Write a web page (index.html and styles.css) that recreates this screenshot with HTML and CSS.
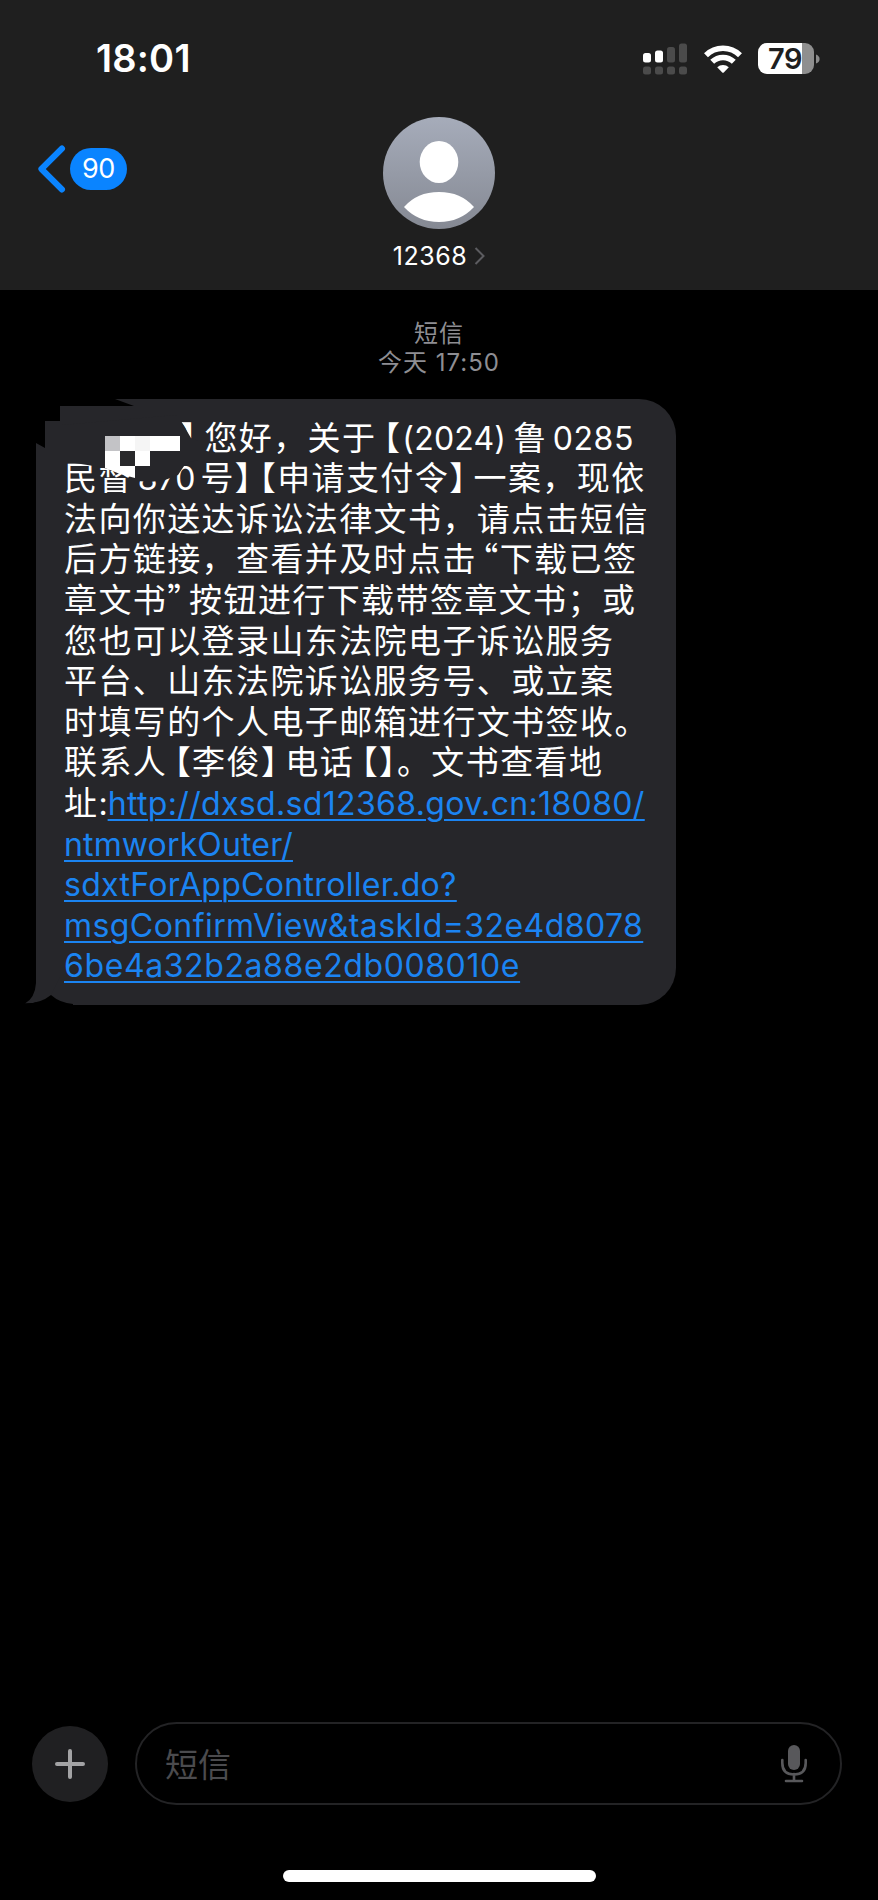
FILE: index.html
```
<!DOCTYPE html>
<html lang="zh-CN">
<head>
  <meta charset="UTF-8">
  <title>12368</title>
  <link rel="stylesheet" href="styles.css">
</head>
<body>

  <header class="top">
    <div class="status-bar">
      <div class="clock">18:01</div>
      <div class="status-icons">
        <svg class="signal" width="44" height="32" viewBox="0 0 44 32">
          <rect x="0" y="10" width="8" height="9.5" rx="2.5" fill="#fff"/>
          <rect x="12" y="7.5" width="8" height="12" rx="2.5" fill="#fff"/>
          <g fill="#4b4b4b">
            <rect x="24" y="4" width="8" height="15.5" rx="2.5"/>
            <rect x="36" y="0.5" width="8" height="19" rx="2.5"/>
            <rect x="0" y="23.5" width="8" height="8" rx="2.5"/>
            <rect x="12" y="23.5" width="8" height="8" rx="2.5"/>
            <rect x="24" y="23.5" width="8" height="8" rx="2.5"/>
            <rect x="36" y="23.5" width="8" height="8" rx="2.5"/>
          </g>
        </svg>
        <svg class="wifi" width="38" height="28" viewBox="0 0 38 28">
          <g fill="none" stroke="#fff" stroke-width="5.6">
            <path d="M2 10.2A24.3 24.3 0 0 1 36 10.2"/>
            <path d="M8.2 16.8A15.6 15.6 0 0 1 29.8 16.8"/>
          </g>
          <path d="M13.2 22.2A8.4 8.4 0 0 1 24.8 22.2L20 27.2Q19 28.2 18 27.2Z" fill="#fff"/>
        </svg>
        <div class="battery"><span>79</span></div>
        <svg class="battery-nub" width="4" height="10" viewBox="0 0 4 10">
          <path d="M0 0.5Q3.6 2 3.6 5T0 9.5Z" fill="#8c8c8c"/>
        </svg>
      </div>
    </div>

    <div class="nav">
      <div class="back">
        <svg width="32" height="50" viewBox="0 0 32 50">
          <path d="M25 4.5L4.400 25L25 45.5" fill="none" stroke="#0a84ff" stroke-width="6" stroke-linecap="round" stroke-linejoin="round"/>
        </svg>
        <span class="badge">90</span>
      </div>
      <div class="contact">
        <svg class="avatar" width="112" height="112" viewBox="0 0 112 112">
          <defs>
            <linearGradient id="avatarFill" x1="0" y1="0" x2="0" y2="1">
              <stop offset="0" stop-color="#a6acba"/>
              <stop offset="1" stop-color="#858993"/>
            </linearGradient>
          </defs>
          <circle cx="56" cy="56" r="56" fill="url(#avatarFill)"/>
          <ellipse cx="56" cy="45" rx="19.3" ry="21" fill="#fff"/>
          <path d="M21 90Q34 75 56 75T91 90Q77 105 56 105T21 90Z" fill="#fff"/>
        </svg>
        <div class="name">12368
          <svg width="11" height="20" viewBox="0 0 11 20">
            <path d="M1.5 2L9.5 10L1.5 18" fill="none" stroke="#5c5c60" stroke-width="2"/>
          </svg>
        </div>
      </div>
    </div>
  </header>

  <main class="thread">
    <div class="stamp">
      <div class="kind">短信</div>
      <div>今天 <span class="stamp-time">17:50</span></div>
    </div>

    <div class="bubble">
      <p class="first"><i class="close">】</i>您好，关于<i class="open">【</i><span class="num year">(2024)</span>鲁<span class="num code">0285</span></p>
      <p>民督<span class="num case">870</span>号<i class="close">】</i><i class="open tight">【</i>申请支付令<i class="close">】</i>一案，现依</p>
      <p>法向你送达诉讼法律文书，请点击短信</p>
      <p>后方链接，查看并及时点击<i class="quote-open">“</i>下载已签</p>
      <p>章文书<i class="quote-close">”</i>按钮进行下载带签章文书；或</p>
      <p>您也可以登录山东法院电子诉讼服务</p>
      <p>平台、山东法院诉讼服务号、或立案</p>
      <p>时填写的个人电子邮箱进行文书签收。</p>
      <p>联系人<i class="open">【</i>李俊<i class="close">】</i>电话<i class="open">【</i><i class="close last">】</i>。文书查看地</p>
      <p>址<span class="colon">:</span><a class="host">http://dxsd.sd12368.gov.cn:18080/</a></p>
      <p><a class="path">ntmworkOuter/</a></p>
      <p><a class="page">sdxtForAppController.do?</a></p>
      <p><a class="query">msgConfirmView&amp;taskId=32e4d8078</a></p>
      <p><a class="hash">6be4a32b2a88e2db008010e</a></p>

      <!-- sender name blacked out -->
      <svg class="redact" width="170" height="90" viewBox="36 398 170 90">
        <path d="M36 398H115L134 405H60V420H45V447L36 442Z" fill="#000"/>
        <path d="M62 424L176 414L181 420L191 437L198 440V459L186 462L178 474L165 479L150 481L138 480L132 474L100 466L62 460Z" fill="#26262a"/>
        <path d="M105 435H180V450H150V465H135V477L120 473L105 467Z" fill="#fff"/>
        <rect x="105" y="435" width="15" height="15" fill="#c3c3c6"/>
        <rect x="135" y="435" width="15" height="15" fill="#f5f5f5"/>
        <rect x="120" y="450" width="15" height="15" fill="#29292b"/>
      </svg>
      <svg class="tail" width="50" height="30" viewBox="24 978 50 30">
        <path d="M36 978V984Q35 999 25 1004.500Q40 1005 51 996L60 978Z" fill="#26262a"/>
        <path d="M24 1004.500Q40 1005 51 996Q60 1004 73 1005V1008H24Z" fill="#000"/>
      </svg>
    </div>
  </main>

  <footer class="composer">
    <div class="plus">
      <svg width="30" height="30" viewBox="0 0 30 30">
        <path d="M15 2V28M2 15H28" stroke="#a3a3a5" stroke-width="4" stroke-linecap="round"/>
      </svg>
    </div>
    <div class="field">
      <span>短信</span>
      <svg width="28" height="40" viewBox="0 0 28 40">
        <rect x="8" y="1" width="12" height="25" rx="6" fill="#58585b"/>
        <path d="M2.300 16V19Q2.300 30.500 14 30.500T25.700 19V16M14 30V37M6 37H22" fill="none" stroke="#58585b" stroke-width="2.600" stroke-linecap="round"/>
      </svg>
    </div>
  </footer>
  <div class="home-bar"></div>

</body>
</html>
```
FILE: styles.css
```
* {
  box-sizing: border-box;
}
body {
  margin: 0;
  height: 1900px;
  background-color: #000;
  color: #fff;
  font-family: Inter, "Noto Sans CJK SC", sans-serif;
  display: flex;
  flex-direction: column;
}
.top {
  height: 290px;
  background-color: #1f1f1f;
}
.status-bar {
  height: 117px;
  padding: 0 58px 0 96px;
  display: flex;
  justify-content: space-between;
}
.clock {
  margin-top: 35px;
  font-size: 38px;
  line-height: 46px;
  font-weight: 600;
  letter-spacing: 0.2px;
}
.status-icons {
  display: flex;
  align-items: center;
  height: 31px;
  margin-top: 43px;
}
.wifi {
  margin-left: 17px;
}
.battery {
  width: 56px;
  height: 31px;
  margin-left: 16px;
  padding-left: 10px;
  border-radius: 9px;
  background: linear-gradient(to right, #fff 44.500px, #8f8f8f 44.500px);
  color: #1f1f1f;
  font-size: 29px;
  line-height: 32px;
  font-weight: 600;
  letter-spacing: -0.5px;
}
.battery-nub {
  margin-left: 2px;
}
.nav {
  display: grid;
  grid-template-columns: 1fr auto 1fr;
}
.back {
  display: flex;
  align-items: center;
  height: 50px;
  margin: 27px 0 0 37px;
}
.badge {
  width: 57px;
  height: 42px;
  margin-left: 1px;
  border-radius: 21px;
  background-color: #0a84ff;
  font-size: 27px;
  line-height: 42px;
  text-align: center;
  letter-spacing: -0.5px;
}
.contact {
  display: flex;
  flex-direction: column;
  align-items: center;
}
.avatar {
  display: block;
}
.name {
  display: flex;
  align-items: center;
  gap: 7px;
  margin-top: 12px;
  font-size: 25px;
  line-height: 30px;
  letter-spacing: 0.5px;
}
.thread {
  flex: 1;
}
.stamp {
  margin-top: 29px;
  height: 79.500px;
  text-align: center;
  color: #8e8e93;
  font-size: 24px;
  line-height: 29px;
  letter-spacing: 1px;
}
.bubble {
  position: relative;
  width: 640px;
  height: 606.500px;
  margin-left: 36px;
  padding: 17px 0 0 28px;
  border-radius: 0 37px 37px 0;
  background-color: #26262a;
}
.bubble p {
  margin: 0;
  height: 40.620px;
  font-family: "Noto Sans CJK SC", sans-serif;
  font-weight: 400;
  font-size: 33px;
  line-height: 40.620px;
  letter-spacing: 1.400px;
  white-space: nowrap;
  text-spacing-trim: space-all;
}
.bubble .first {
  padding-left: 116px;
}
.bubble i {
  font-style: normal;
  font-feature-settings: "halt";
}
.open {
  margin-left: 7px;
}
.close {
  margin-right: 6.500px;
}
.open.tight {
  margin-left: 0;
}
.close.last {
  margin-right: 0;
}
.num, .colon, .bubble a {
  font-family: Inter, sans-serif;
  font-size: 32px;
  letter-spacing: 0;
}
.code {
  margin-left: 5px;
  letter-spacing: 0.600px;
}
.year {
  margin: 0 7px 0 1px;
  letter-spacing: 0.200px;
}
.case {
  margin: 0 5px;
}
.quote-open {
  margin-left: 5px;
}
.quote-close {
  margin-right: 4px;
}
.bubble a {
  color: #1b84f2;
  text-decoration: underline;
  text-decoration-thickness: 2px;
  text-underline-offset: 4px;
}
.bubble .host {
  letter-spacing: 0.350px;
}
.bubble .path {
  letter-spacing: 0.150px;
}
.bubble .page {
  letter-spacing: 0.320px;
}
.bubble .query {
  letter-spacing: 0.440px;
}
.bubble .hash {
  letter-spacing: 0.600px;
}
.redact {
  position: absolute;
  left: 0;
  top: 0;
}
.tail {
  position: absolute;
  left: -12px;
  bottom: -2px;
}
.composer {
  display: flex;
  align-items: center;
  height: 83px;
  padding: 0 36px 0 32px;
}
.plus {
  width: 76px;
  height: 76px;
  border-radius: 50%;
  background-color: #202022;
  display: flex;
  align-items: center;
  justify-content: center;
}
.field {
  flex: 1;
  height: 83px;
  margin-left: 27px;
  padding: 0 32px 2px 28px;
  border: 2px solid #232325;
  border-radius: 42px;
  display: flex;
  align-items: center;
  justify-content: space-between;
  color: #4b4b4e;
  font-size: 33px;
}
.field svg {
  margin-top: 3px;
}
.home-bar {
  width: 313px;
  height: 12px;
  margin: 65px 0 18px 283px;
  border-radius: 6px;
  background-color: #fff;
}
```
